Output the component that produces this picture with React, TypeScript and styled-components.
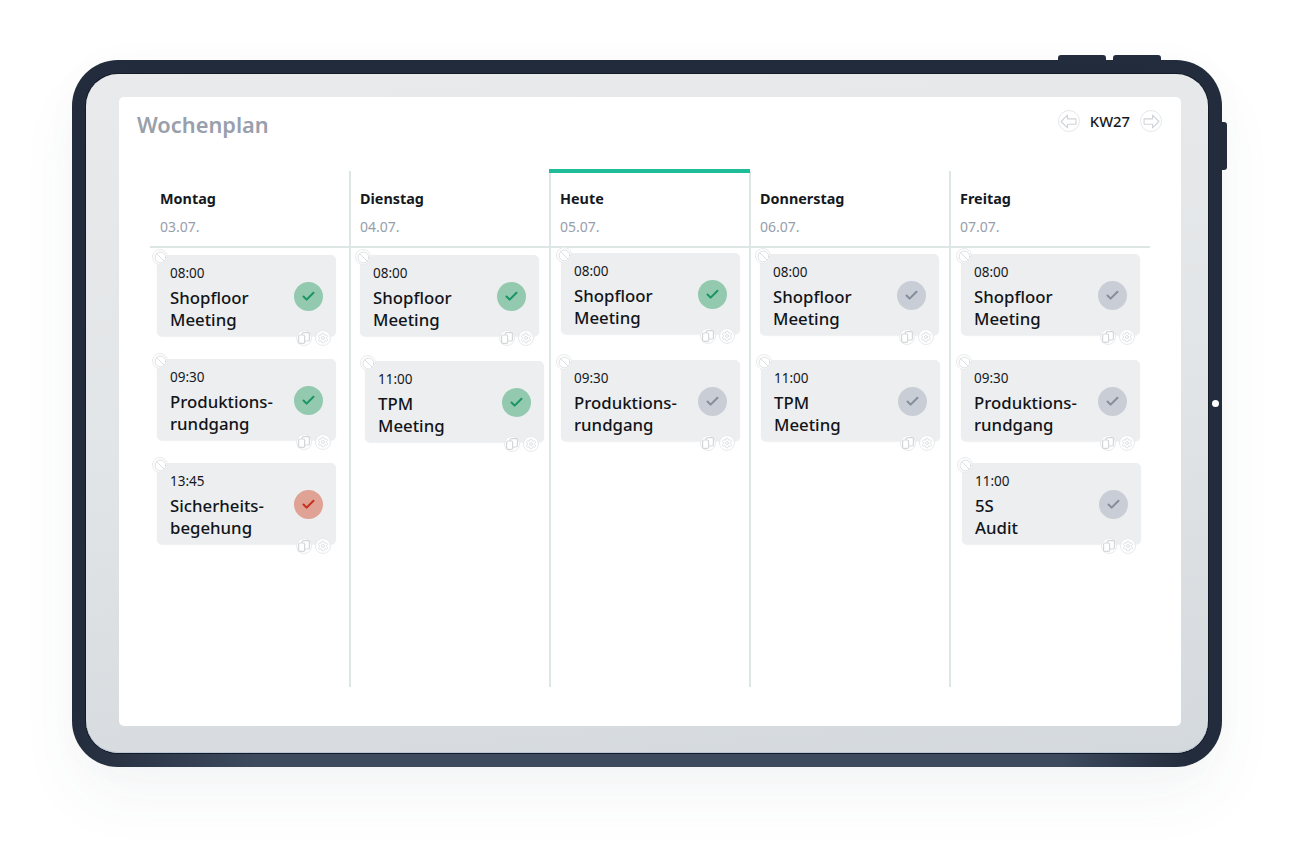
import React from "react";
import styled, { createGlobalStyle } from "styled-components";
import { Ban, Check, Settings } from "lucide-react";

const Global = createGlobalStyle`
  html, body { margin: 0; padding: 0; background: #fff; }
  body { font-family: "Noto Sans", "Open Sans", sans-serif; color: #111; overflow: hidden; }
`;

const Page = styled.div`
  width: 1299px;
  height: 867px;
  padding: 60px 0 0 72px;
  box-sizing: border-box;
  background: #fff;
`;

const Device = styled.div`
  position: relative;
  width: 1150px;
  height: 707px;
  box-sizing: border-box;
  padding: 14px;
  border-radius: 46px;
  background:
    linear-gradient(90deg, #222c3c 0%, rgba(34, 44, 60, 0) 16%, rgba(34, 44, 60, 0) 86%, #222c3c 97%),
    linear-gradient(180deg, #212b3b 0%, #252f41 88%, #3e4a5e 98%);
  box-shadow: 0 32px 60px rgba(50, 70, 100, 0.05), 0 0 40px rgba(50, 70, 100, 0.02);
`;

const TopButton = styled.div<{ $right: number }>`
  position: absolute;
  top: -5px;
  right: ${(p) => p.$right}px;
  width: 48px;
  height: 8px;
  border-radius: 3px 3px 0 0;
  background: #222c3c;
`;

const SideButton = styled.div`
  position: absolute;
  top: 62px;
  right: -5px;
  width: 6px;
  height: 48px;
  border-radius: 0 3px 3px 0;
  background: #222c3c;
`;

const Camera = styled.div`
  position: absolute;
  top: 340px;
  right: 3px;
  width: 7px;
  height: 7px;
  border-radius: 50%;
  background: #fff;
`;

const Bezel = styled.div`
  height: 679px;
  box-sizing: border-box;
  padding: 23px 27px 27px 33px;
  border-radius: 32px;
  background: linear-gradient(175deg, #e8eaec 0%, #e2e5e7 50%, #d4d9dd 100%);
  box-shadow: inset 0 -1px 0 #b9c6d6, 0 0 0 1px #141b27;
`;

const Screen = styled.div`
  height: 629px;
  border-radius: 5px;
  background: #fff;
`;

const Header = styled.div`
  height: 74px;
  display: flex;
  justify-content: space-between;
  align-items: flex-start;
  padding: 0 19px 0 18px;
`;

const Title = styled.h1`
  margin: 13px 0 0;
  font-size: 21.8px;
  line-height: 30px;
  font-weight: 600;
  color: #99a0ac;
`;

const WeekNav = styled.div`
  display: flex;
  align-items: center;
  gap: 10px;
  margin-top: 13px;
`;

const Week = styled.span`
  font-size: 14.8px;
  line-height: 22px;
  font-weight: 500;
  color: #15181d;
`;

const NavButton = styled.span`
  width: 22px;
  height: 22px;
  border-radius: 50%;
  border: 1px solid #e6e8ea;
  box-sizing: border-box;
  display: flex;
  align-items: center;
  justify-content: center;
  background: #fff;
`;

const Board = styled.div`
  display: grid;
  grid-template-columns: repeat(5, 200px);
  width: 1000px;
  height: 516px;
  margin-left: 31px;
`;

const Column = styled.div<{ $last: boolean; $today: boolean }>`
  position: relative;
  box-sizing: border-box;
  margin-right: ${(p) => (p.$last ? "0" : "-1px")};
  border-right: ${(p) => (p.$last ? "none" : "2px solid #dde6e4")};
  &::before {
    content: "";
    display: ${(p) => (p.$today ? "block" : "none")};
    position: absolute;
    top: -2px;
    left: -1px;
    right: -1px;
    height: 4px;
    background: #1fbc98;
  }
`;

const ColumnHead = styled.div`
  height: 77px;
  box-sizing: border-box;
  padding: 17px 0 0 10px;
  border-bottom: 2px solid #dde6e4;
`;

const DayName = styled.div`
  font-size: 14.4px;
  line-height: 22px;
  font-weight: 700;
  color: #15181d;
`;

const DayDate = styled.div`
  margin-top: 6px;
  font-size: 14px;
  line-height: 22px;
  color: #979eaa;
`;

const Card = styled.div<{ $x: number; $y: number }>`
  position: absolute;
  left: ${(p) => p.$x}px;
  top: ${(p) => p.$y}px;
  width: 179px;
  height: 81px;
  box-sizing: border-box;
  padding: 8px 13px 0;
  display: flex;
  align-items: flex-start;
  justify-content: space-between;
  border-radius: 5px;
  background: #edeef0;
  box-shadow: 0 1px 1px rgba(120, 130, 140, 0.12);
`;

const CardText = styled.div`
  display: flex;
  flex-direction: column;
`;

const Time = styled.div`
  font-size: 13.5px;
  line-height: 20px;
  color: #15181d;
`;

const CardTitle = styled.div`
  margin-top: 4px;
  font-size: 16.8px;
  line-height: 21.5px;
  font-weight: 500;
  color: #111418;
  white-space: pre-line;
`;

const tones = {
  done: { bg: "#93c9ae", fg: "#1a9464" },
  fail: { bg: "#dfa294", fg: "#c5301c" },
  open: { bg: "#c9ced6", fg: "#858c9a" },
};

const Status = styled.div<{ $tone: keyof typeof tones }>`
  width: 29px;
  height: 29px;
  margin-top: 19px;
  border-radius: 50%;
  display: flex;
  align-items: center;
  justify-content: center;
  background: ${(p) => tones[p.$tone].bg};
  color: ${(p) => tones[p.$tone].fg};
`;

const Badge = styled.span<{ $left?: number; $right?: number; $top?: number; $bottom?: number }>`
  position: absolute;
  ${(p) => (p.$left !== undefined ? `left: ${p.$left}px;` : "")}
  ${(p) => (p.$right !== undefined ? `right: ${p.$right}px;` : "")}
  ${(p) => (p.$top !== undefined ? `top: ${p.$top}px;` : "")}
  ${(p) => (p.$bottom !== undefined ? `bottom: ${p.$bottom}px;` : "")}
  width: 16px;
  height: 16px;
  box-sizing: border-box;
  border-radius: 50%;
  border: 1px solid #e8eaec;
  background: #fff;
  color: #d4d7da;
  display: flex;
  align-items: center;
  justify-content: center;
`;

type Tone = keyof typeof tones;
type Item = { time: string; title: string; tone: Tone; x: number; y: number };

const S = "Shopfloor\nMeeting";
const P = "Produktions-\nrundgang";
const T = "TPM\nMeeting";

const days: { name: string; date: string; today?: boolean; items: Item[] }[] = [
  {
    name: "Montag",
    date: "03.07.",
    items: [
      { time: "08:00", title: S, tone: "done", x: 7, y: 84 },
      { time: "09:30", title: P, tone: "done", x: 7, y: 188 },
      { time: "13:45", title: "Sicherheits-\nbegehung", tone: "fail", x: 7, y: 292 },
    ],
  },
  {
    name: "Dienstag",
    date: "04.07.",
    items: [
      { time: "08:00", title: S, tone: "done", x: 10, y: 84 },
      { time: "11:00", title: T, tone: "done", x: 15, y: 190 },
    ],
  },
  {
    name: "Heute",
    date: "05.07.",
    today: true,
    items: [
      { time: "08:00", title: S, tone: "done", x: 11, y: 82 },
      { time: "09:30", title: P, tone: "open", x: 11, y: 189 },
    ],
  },
  {
    name: "Donnerstag",
    date: "06.07.",
    items: [
      { time: "08:00", title: S, tone: "open", x: 10, y: 83 },
      { time: "11:00", title: T, tone: "open", x: 11, y: 189 },
    ],
  },
  {
    name: "Freitag",
    date: "07.07.",
    items: [
      { time: "08:00", title: S, tone: "open", x: 11, y: 83 },
      { time: "09:30", title: P, tone: "open", x: 11, y: 189 },
      { time: "11:00", title: "5S\nAudit", tone: "open", x: 12, y: 292 },
    ],
  },
];

const ArrowGlyph = ({ flip }: { flip?: boolean }) => (
  <svg
    width="17"
    height="15"
    viewBox="0 0 16 14"
    fill="none"
    stroke="#cfd2d6"
    strokeWidth="1"
    strokeLinejoin="round"
    style={flip ? { transform: "scaleX(-1)" } : undefined}
  >
    <path d="M1 7 L7 1 V4.5 H15 V9.5 H7 V13 Z" />
  </svg>
);

const CopyGlyph = () => (
  <svg width="12" height="12" viewBox="0 0 10 10" fill="none" stroke="#d4d7da" strokeWidth="1">
    <rect x="3.5" y="0.5" width="6" height="7" rx="1" />
    <rect x="0.5" y="2.5" width="5" height="7" rx="1" fill="#fff" />
  </svg>
);

export default function App() {
  return (
    <Page>
      <Global />
      <Device>
        <TopButton $right={116} />
        <TopButton $right={61} />
        <SideButton />
        <Camera />
        <Bezel>
          <Screen>
            <Header>
              <Title>Wochenplan</Title>
              <WeekNav>
                <NavButton>
                  <ArrowGlyph />
                </NavButton>
                <Week>KW27</Week>
                <NavButton>
                  <ArrowGlyph flip />
                </NavButton>
              </WeekNav>
            </Header>
            <Board>
              {days.map((day, i) => (
                <Column key={day.name} $last={i === days.length - 1} $today={!!day.today}>
                  <ColumnHead>
                    <DayName>{day.name}</DayName>
                    <DayDate>{day.date}</DayDate>
                  </ColumnHead>
                  {day.items.map((item) => (
                    <Card key={item.time + item.title} $x={item.x} $y={item.y}>
                      <CardText>
                        <Time>{item.time}</Time>
                        <CardTitle>{item.title}</CardTitle>
                      </CardText>
                      <Status $tone={item.tone}>
                        <Check size={15} strokeWidth={3.2} />
                      </Status>
                      <Badge $left={-5} $top={-6}>
                        <Ban size={13} strokeWidth={1.5} />
                      </Badge>
                      <Badge $right={24} $bottom={-10}>
                        <CopyGlyph />
                      </Badge>
                      <Badge $right={5} $bottom={-10}>
                        <Settings size={12} strokeWidth={1.5} />
                      </Badge>
                    </Card>
                  ))}
                </Column>
              ))}
            </Board>
          </Screen>
        </Bezel>
      </Device>
    </Page>
  );
}
